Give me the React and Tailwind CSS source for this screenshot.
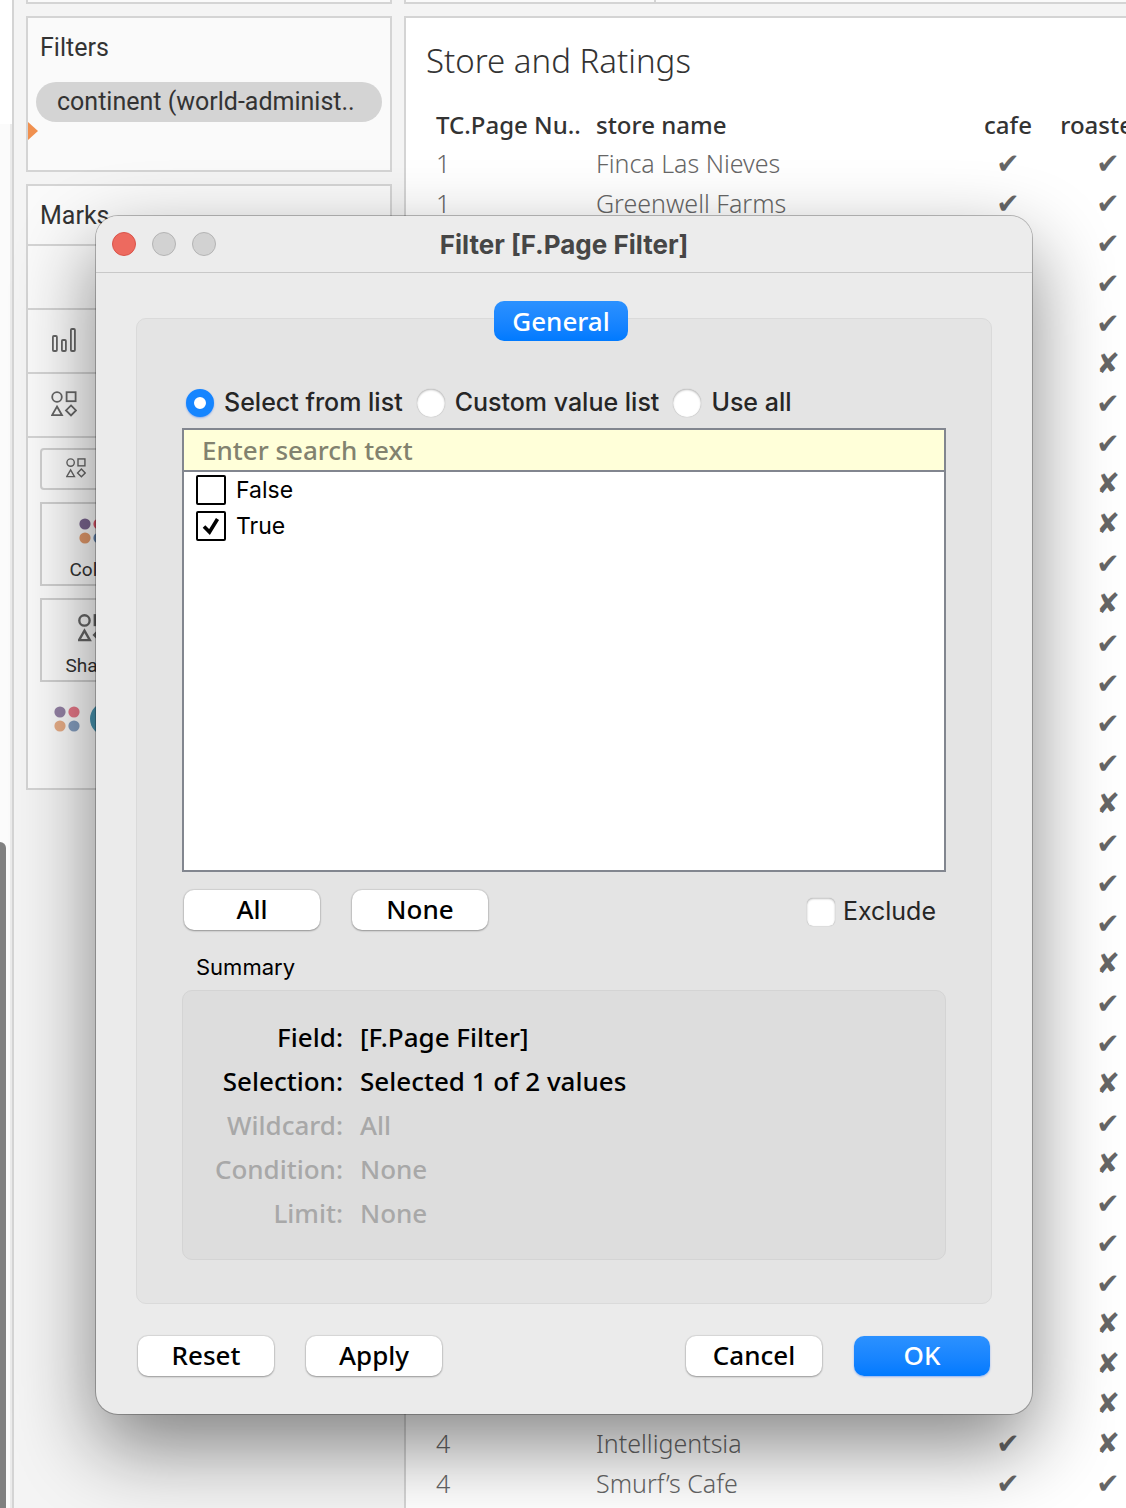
import React, { useState } from "react";

const FIRST_ROWS = [
  { page: "1", name: "Finca Las Nieves", cafe: "✔" },
  { page: "1", name: "Greenwell Farms", cafe: "✔" },
];
const LAST_ROWS = [
  { page: "4", name: "Intelligentsia", cafe: "✔" },
  { page: "4", name: "Smurf’s Cafe", cafe: "✔" },
];
const ROASTERY = "✔✔✔✔✔✘✔✔✘✘✔✘✔✔✔✔✘✔✔✔✘✔✔✘✔✘✔✔✔✘✘✘✘✔".split("");

const ROWS = ROASTERY.map((roastery, i) => {
  const tail = i - (ROASTERY.length - LAST_ROWS.length);
  return { ...(FIRST_ROWS[i] || LAST_ROWS[tail] || {}), roastery };
});

function Shapes({ className, strokeWidth = 1.8 }) {
  return (
    <svg viewBox="0 0 26 26" className={className} fill="none" stroke="#666" strokeWidth={strokeWidth} aria-hidden="true">
      <circle cx="6" cy="6" r="4.8" />
      <rect x="15.6" y="1.2" width="9" height="9" />
      <path d="M6 15.5 L11 24.2 H1 Z" />
      <path d="M20 14.4 L25 19.4 L20 24.4 L15 19.4 Z" />
    </svg>
  );
}

function Dots({ className }) {
  return (
    <svg viewBox="0 0 26 26" className={className} aria-hidden="true">
      <circle cx="6" cy="6" r="5.6" fill="#7b6590" />
      <circle cx="20" cy="6" r="5.6" fill="#e0576b" />
      <circle cx="6" cy="20" r="5.6" fill="#e39a6b" />
      <circle cx="20" cy="20" r="5.6" fill="#6787b0" />
    </svg>
  );
}

function Bars() {
  return (
    <svg viewBox="0 0 24 24" className="h-6 w-6" fill="none" stroke="#666" strokeWidth="1.8" aria-hidden="true">
      <rect x="0.9" y="8" width="4" height="15" rx="1" />
      <rect x="9.9" y="12" width="4" height="11" rx="1" />
      <rect x="18.9" y="1" width="4" height="22" rx="1" />
    </svg>
  );
}

function MarkButton({ label, children }) {
  return (
    <button className="flex h-[84px] w-[104px] flex-col items-center justify-between border-2 border-[#d0d0d0] pt-3.5 font-[Roboto,sans-serif] text-[19px] leading-7 text-[#333]">
      {children}
      <span>{label}</span>
    </button>
  );
}

function Sidebar() {
  return (
    <aside className="flex w-[390px] shrink-0 flex-col gap-3 pr-3 pl-3 font-[Roboto,sans-serif] text-[25px] text-[#333]">
      <div className="h-1 border-2 border-t-0 border-[#d4d4d4] bg-[#fafafa]" />
      <section className="h-[156px] border-2 border-[#d4d4d4] bg-[#fafafa]">
        <h2 className="px-3 pt-3 leading-9">Filters</h2>
        <div className="mx-2 mt-4 h-10 rounded-full bg-[#d4d4d4] px-[21px] leading-10 whitespace-nowrap">
          continent (world-administ..
        </div>
        <svg viewBox="0 0 10 18" className="h-[18px] w-[10px]" aria-hidden="true">
          <path d="M0 0 L10 9 L0 18 Z" fill="#f0904f" />
        </svg>
      </section>
      <section className="flex h-[606px] flex-col border-2 border-[#d4d4d4] bg-[#fafafa]">
        <h2 className="h-[60px] border-b-2 border-[#d4d4d4] px-3 leading-[60px]">Marks</h2>
        <div className="h-16 border-b-2 border-[#d4d4d4]" />
        <div className="flex h-16 items-center border-b-2 border-[#d4d4d4] pb-0.5 pl-6">
          <Bars />
        </div>
        <div className="flex h-16 items-center border-b-2 border-[#d4d4d4] pb-0.5 pl-[23px]">
          <Shapes className="h-[26px] w-[26px]" />
        </div>
        <div className="flex flex-col gap-3 px-3 pt-2.5">
          <div className="flex h-[42px] items-center rounded-sm border-2 border-[#d0d0d0] pb-0.5 pl-6">
            <Shapes className="h-5 w-5" />
          </div>
          <MarkButton label="Color">
            <Dots className="h-[26px] w-[26px]" />
          </MarkButton>
          <MarkButton label="Shape">
            <Shapes className="h-7 w-7" strokeWidth={2.2} />
          </MarkButton>
          <div className="flex items-center gap-2.5 pt-2 pl-3.5">
            <Dots className="h-[26px] w-[26px] opacity-80" />
            <span className="h-[34px] w-32 rounded-full bg-[#4996b2]" />
          </div>
        </div>
      </section>
    </aside>
  );
}

function Worksheet() {
  return (
    <main className="flex min-w-0 flex-1 flex-col gap-3 overflow-hidden font-['Noto_Sans',sans-serif] text-[#666]">
      <div className="flex h-1 border-b-2 border-l-2 border-[#d4d4d4] bg-[#fafafa]">
        <div className="w-[250px] border-r-2 border-[#d4d4d4]" />
      </div>
      <section className="flex-1 overflow-hidden border-t-2 border-l-2 border-[#d4d4d4] bg-white">
        <h1 className="pt-[22px] pl-5 text-[33px] leading-[42px] font-light text-[#333]">Store and Ratings</h1>
        <table className="mt-6 ml-[30px] w-[722px] table-fixed border-collapse text-[25px] leading-[38px]">
          <thead>
            <tr className="h-9 text-[24px] text-[#333]">
              <th className="w-40 p-0 text-left font-medium">TC.Page Nu..</th>
              <th className="p-0 text-left font-medium">store name</th>
              <th className="w-[100px] p-0 text-center font-medium">cafe</th>
              <th className="w-[100px] p-0 text-center font-medium">roastery</th>
            </tr>
          </thead>
          <tbody>
            {ROWS.map((row, i) => (
              <tr key={i} className="h-10">
                <td className="p-0 pb-0.5 font-light">{row.page}</td>
                <td className="p-0 pb-0.5 font-light">{row.name}</td>
                <td className="p-0 text-center font-['DejaVu_Sans',sans-serif] text-[28px]">{row.cafe}</td>
                <td className="p-0 text-center font-['DejaVu_Sans',sans-serif] text-[28px]">{row.roastery}</td>
              </tr>
            ))}
          </tbody>
        </table>
      </section>
    </main>
  );
}

function PushButton({ children, primary }) {
  return (
    <button
      className={
        primary
          ? "h-10 w-[136px] rounded-[10px] bg-linear-to-b from-[#2b91ff] to-[#007aff] pb-1 text-white shadow-[0_1px_2px_rgba(0,90,255,0.4)]"
          : "h-10 w-[136px] rounded-[10px] bg-white pb-1 text-black shadow-[0_0_1px_1px_rgba(0,0,0,0.08),0_1px_2px_rgba(0,0,0,0.3)]"
      }
    >
      {children}
    </button>
  );
}

function Radio({ label, checked, onChange }) {
  return (
    <label className="flex items-center gap-2.5">
      <input
        type="radio"
        name="mode"
        checked={checked}
        onChange={onChange}
        className="h-7 w-7 appearance-none rounded-full bg-white shadow-[inset_0_1px_2px_rgba(0,0,0,0.25),0_0_1px_rgba(0,0,0,0.3)] checked:border-8 checked:border-[#1585ff] checked:shadow-[0_1px_2px_rgba(0,90,255,0.4)]"
      />
      {label}
    </label>
  );
}

function ListItem({ label, initial }) {
  const [on, setOn] = useState(initial);
  return (
    <label className="flex h-9 items-center gap-2.5">
      <span className="relative h-[30px] w-[30px]">
        <input
          type="checkbox"
          checked={on}
          onChange={() => setOn(!on)}
          className="block h-[30px] w-[30px] appearance-none rounded-xs border-2 border-black bg-white"
        />
        {on && (
          <svg viewBox="0 0 30 30" className="pointer-events-none absolute inset-0" aria-hidden="true">
            <path d="M8 15.5 L13.5 21 L21.5 8" fill="none" stroke="#000" strokeWidth="3.6" />
          </svg>
        )}
      </span>
      {label}
    </label>
  );
}

const SUMMARY = [
  { label: "Field:", value: "[F.Page Filter]", on: true },
  { label: "Selection:", value: "Selected 1 of 2 values", on: true },
  { label: "Wildcard:", value: "All", on: false },
  { label: "Condition:", value: "None", on: false },
  { label: "Limit:", value: "None", on: false },
];

function FilterDialog() {
  const [mode, setMode] = useState(0);
  return (
    <div
      role="dialog"
      aria-labelledby="dialog-title"
      className="w-full rounded-[22px] bg-[#ebebeb] font-['Noto_Sans',sans-serif] text-[26px] font-medium text-black shadow-[0_0_0_1px_rgba(0,0,0,0.25),0_32px_80px_rgba(0,0,0,0.48)]"
    >
      <header className="grid h-[57px] grid-cols-[1fr_auto_1fr] items-center rounded-t-[22px] border-b border-[#c8c8c8] bg-[#ececec] px-4 font-[Inter,sans-serif]">
        <div className="flex gap-4">
          <button aria-label="Close" className="h-6 w-6 rounded-full border border-[#d9544a] bg-[#ed6a5f]" />
          <button aria-label="Minimize" className="h-6 w-6 rounded-full border border-[#b4b4b4] bg-[#d2d2d2]" />
          <button aria-label="Zoom" className="h-6 w-6 rounded-full border border-[#b4b4b4] bg-[#d2d2d2]" />
        </div>
        <h2 id="dialog-title" className="text-[26px] font-bold text-[#464646]">
          Filter [F.Page Filter]
        </h2>
      </header>

      <div className="px-10 pt-[45px] pb-[38px]">
        <div className="rounded-[10px] border border-[#dadada] bg-[#e4e4e4] px-[45px] pb-[43px]">
          <div role="tablist" className="-mt-[18px] flex justify-center pr-1.5">
            <button
              role="tab"
              aria-selected="true"
              className="h-10 w-[134px] rounded-[10px] bg-linear-to-b from-[#2b91ff] to-[#007aff] text-white"
            >
              General
            </button>
          </div>

          <div className="mt-[42px] flex h-10 gap-3.5 pl-1 font-[Inter,sans-serif] text-[25px] text-[#262626]">
            <Radio label="Select from list" checked={mode === 0} onChange={() => setMode(0)} />
            <Radio label="Custom value list" checked={mode === 1} onChange={() => setMode(1)} />
            <Radio label="Use all" checked={mode === 2} onChange={() => setMode(2)} />
          </div>

          <div className="mt-[5px] h-[444px] border-2 border-[#82868f] bg-white">
            <input
              type="text"
              aria-label="Search"
              placeholder="Enter search text"
              className="block h-[42px] w-full border-b-2 border-[#82868f] bg-[#ffffd9] px-[18px] outline-none placeholder:text-[#82826f]"
            />
            <div className="flex flex-col pl-3 font-[Inter,sans-serif] text-[23px] font-normal">
              <ListItem label="False" initial={false} />
              <ListItem label="True" initial={true} />
            </div>
          </div>

          <div className="mt-[17px] flex items-center gap-8 pl-0.5">
            <PushButton>All</PushButton>
            <PushButton>None</PushButton>
            <label className="mt-1 mr-2.5 ml-auto flex items-center gap-2 font-[Inter,sans-serif] text-[25px] font-normal text-[#262626]">
              <input
                type="checkbox"
                className="h-7 w-7 appearance-none rounded-md bg-white shadow-[inset_0_1px_2px_rgba(0,0,0,0.25),0_0_1px_rgba(0,0,0,0.3)] checked:bg-[#1585ff]"
              />
              Exclude
            </label>
          </div>

          <h3 className="mt-[19px] pl-3.5 font-[Inter,sans-serif] text-[22px] leading-[34px] font-normal">Summary</h3>
          <dl className="mt-1.5 grid h-[270px] auto-rows-[44px] grid-cols-[160px_1fr] gap-x-[17px] rounded-[10px] border border-[#d4d4d4] bg-[#dddddd] pt-6 leading-[44px]">
            {SUMMARY.map((item) => (
              <React.Fragment key={item.label}>
                <dt className={item.on ? "text-right" : "text-right text-[#a8a8a8]"}>{item.label}</dt>
                <dd className={item.on ? "" : "text-[#a8a8a8]"}>{item.value}</dd>
              </React.Fragment>
            ))}
          </dl>
        </div>

        <footer className="mt-8 flex gap-8 px-0.5">
          <PushButton>Reset</PushButton>
          <PushButton>Apply</PushButton>
          <div className="ml-auto flex gap-8">
            <PushButton>Cancel</PushButton>
            <PushButton primary>OK</PushButton>
          </div>
        </footer>
      </div>
    </div>
  );
}

export default function App() {
  return (
    <div className="relative flex h-screen overflow-hidden bg-[#f4f4f4]">
      <div className="flex w-3.5 shrink-0 flex-col border-r-2 border-[#d4d4d4] bg-white">
        <div className="h-[124px]" />
        <div className="flex flex-1 flex-col justify-end border-r-2 border-[#ebebeb] bg-[#fbfbfb]">
          <div className="h-[666px] w-1.5 rounded-tr-md bg-[#808080]" />
        </div>
      </div>
      <Sidebar />
      <Worksheet />
      <div className="absolute inset-x-0 top-0 flex justify-center pt-[216px] pr-[94px] pl-24">
        <FilterDialog />
      </div>
    </div>
  );
}
